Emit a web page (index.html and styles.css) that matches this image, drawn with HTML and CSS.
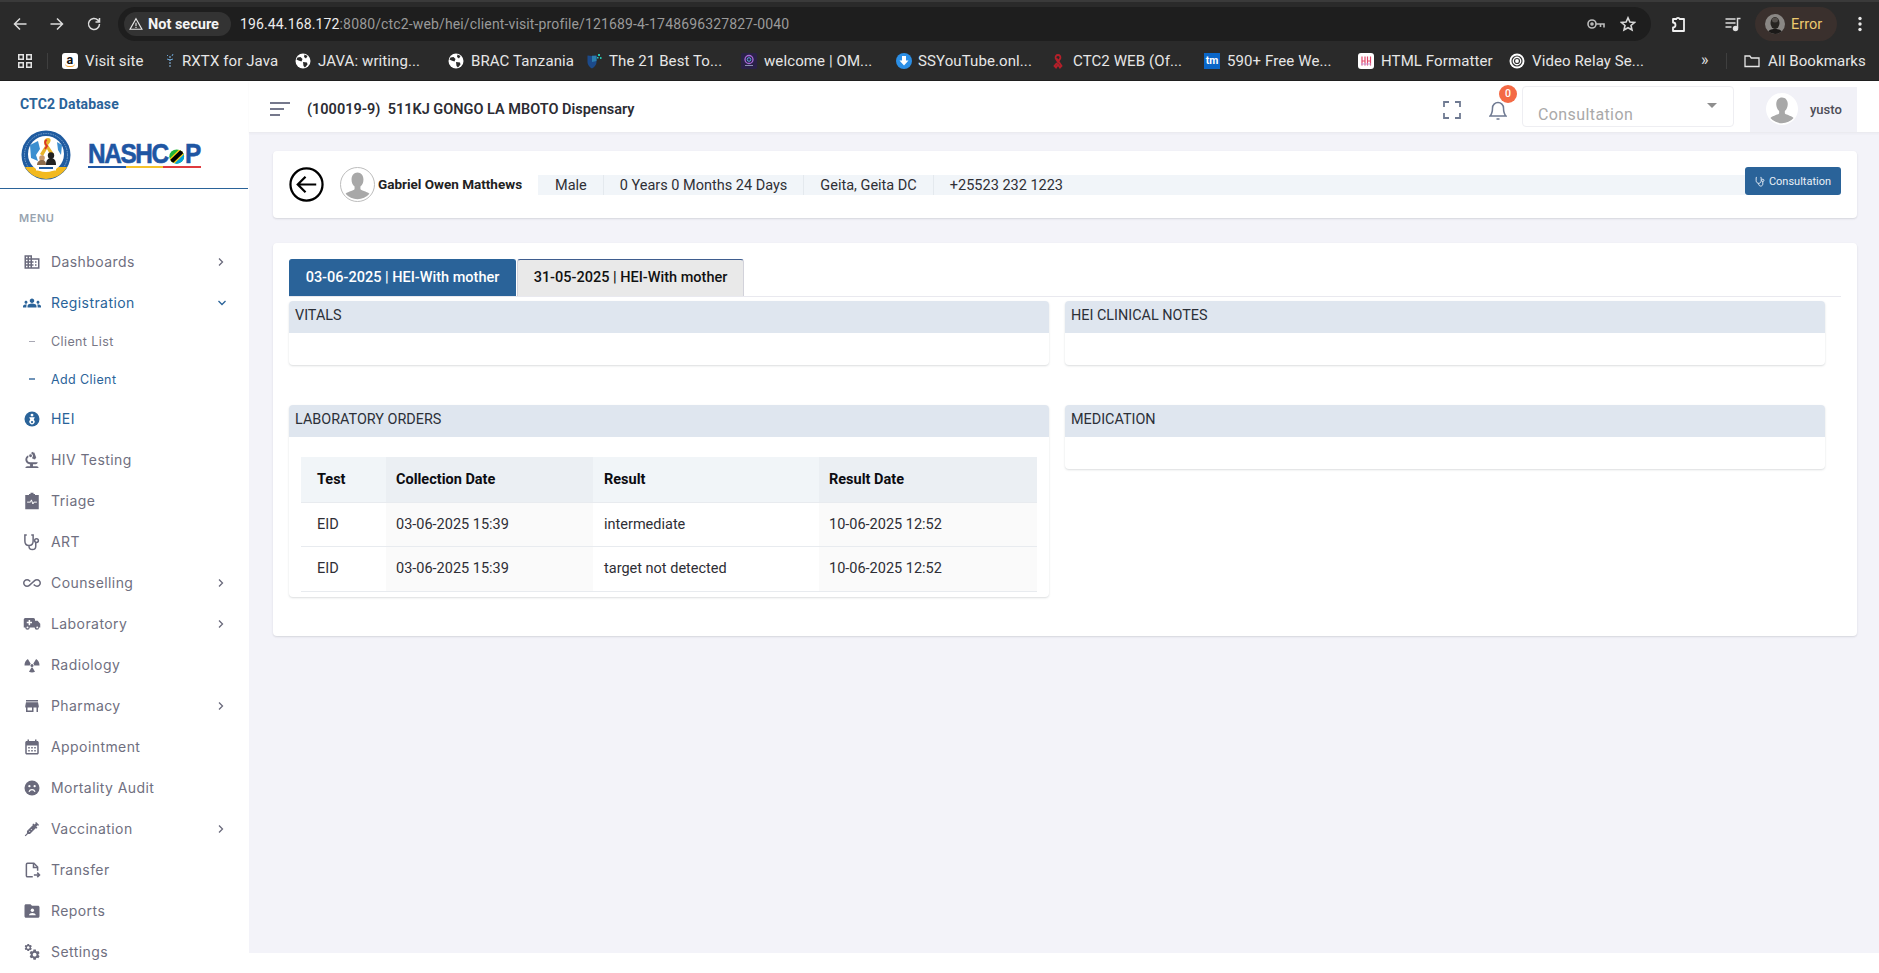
FILE: index.html
```html
<!DOCTYPE html>
<html lang="en">
<head>
<meta charset="utf-8">
<title>CTC2 Database</title>
<link rel="stylesheet" href="styles.css">
</head>
<body>
<svg class="defs" width="0" height="0" aria-hidden="true">
  <symbol id="person" viewBox="0 0 36 36"><path d="M18 5c4 0 6.500 3.200 6.500 7.500 0 3.300-1.300 6.200-3.300 7.800v2.600c0 1.300 6.800 2.600 9.800 5.100a17 17 0 0 1-26 0c3-2.500 9.800-3.800 9.800-5.100v-2.600c-2-1.600-3.300-4.500-3.300-7.800C11.500 8.200 14 5 18 5z" fill="#a8a8a8"/></symbol>
  <symbol id="gear" viewBox="0 0 24 24"><path d="M19.140 12.940c.04-.3.060-.61.060-.94 0-.32-.02-.64-.07-.94l2.030-1.580c.18-.14.23-.41.120-.61l-1.920-3.320c-.12-.22-.37-.29-.59-.22l-2.390.96c-.5-.38-1.030-.7-1.620-.94l-.36-2.540c-.04-.24-.24-.41-.48-.41h-3.840c-.24 0-.43.170-.47.410l-.36 2.540c-.59.240-1.130.570-1.620.940l-2.390-.96c-.22-.08-.47 0-.59.220L2.740 8.870c-.12.210-.08.470.120.610l2.030 1.580c-.05.300-.09.630-.09.940s.020.640.070.940l-2.030 1.580c-.18.140-.23.410-.12.610l1.920 3.320c.12.220.37.290.59.220l2.390-.96c.5.380 1.030.7 1.620.94l.36 2.540c.05.240.24.410.48.410h3.840c.24 0 .44-.17.47-.41l.36-2.540c.59-.24 1.130-.56 1.620-.94l2.390.96c.22.080.47 0 .59-.22l1.920-3.320c.12-.22.070-.47-.12-.61l-2.010-1.580zM12 15.600c-1.980 0-3.600-1.620-3.600-3.600s1.620-3.600 3.600-3.600 3.600 1.620 3.600 3.600-1.620 3.600-3.600 3.600z"/></symbol>
  <symbol id="globe" viewBox="0 0 16 16"><circle cx="8" cy="8" r="7.500" fill="#fff"/><path d="M2.500 4.500l3-.5 2 2-1 2.500-3-1-2-1zM9.500 1.500l3 1.500-1.500 2.500-2-1.500zM8 9l4 .5.5 2-2.500 3-1.500-1.500z" fill="#2b2b2b"/></symbol>
</svg>

<div class="browser">
  <div class="toolbar">
    <div class="nav-buttons">
      <svg class="tb-icon" viewBox="0 0 16 16"><path d="M14.500 8H2.500M8 2.500L2.500 8 8 13.500"/></svg>
      <svg class="tb-icon" viewBox="0 0 16 16"><path d="M1.500 8h12M8 2.500L13.500 8 8 13.500"/></svg>
      <svg class="tb-icon" viewBox="0 0 16 16"><path d="M13.500 8a5.500 5.500 0 1 1-1.600-3.900L13.500 6M13.500 2v4h-4"/></svg>
    </div>
    <div class="omnibox">
      <div class="chip">
        <svg class="warn" viewBox="0 0 16 16"><path d="M8 2l6.800 12H1.200zM8 6.500v4M8 11.300v1.200"/></svg>
        <span>Not secure</span>
      </div>
      <div class="url"><span class="url-host">196.44.168.172</span>:8080/ctc2-web/hei/client-visit-profile/121689-4-1748696327827-0040</div>
      <svg class="omni-icon" viewBox="0 0 18 12"><circle cx="5" cy="6" r="4"/><circle cx="5" cy="6" r="1"/><path d="M9 6h8v3.500M13.500 6v3"/></svg>
      <svg class="omni-icon star" viewBox="0 0 16 16"><path d="M8 1.800l1.900 4.200 4.500.5-3.400 3 1 4.500L8 11.700 4 14l1-4.500-3.400-3 4.500-.5z"/></svg>
    </div>
    <svg class="tb-icon puzzle" viewBox="0 0 18 18"><path d="M5 4h3.200a2 2 0 0 1 3.600 0H16v12H5v-3.500a2.500 2.500 0 0 0 0-5z" stroke-linejoin="round"/></svg>
    <svg class="tb-icon queue" viewBox="0 0 18 18"><path d="M1.500 4h10M1.500 8h10M1.500 12h6M16.500 3.500h-3V13"/><circle cx="11.500" cy="13.500" r="2" fill="#e8e8e8"/></svg>
    <div class="profile">
      <span class="profile-pic"><svg viewBox="0 0 20 20"><ellipse cx="10" cy="9" rx="4.500" ry="6" fill="#262320"/><ellipse cx="10" cy="6" rx="3" ry="2.500" fill="#55504c"/><path d="M2 20c1-4 4-5 8-5s7 1 8 5z" fill="#1b1918"/></svg></span>
      <span class="profile-label">Error</span>
    </div>
    <svg class="dots" viewBox="0 0 4 16"><circle cx="2" cy="2.500" r="1.700"/><circle cx="2" cy="8" r="1.700"/><circle cx="2" cy="13.500" r="1.700"/></svg>
  </div>
  <div class="bookmarks">
    <svg class="apps" viewBox="0 0 14 14"><path d="M.75.75h4.500v4.500h-4.500zM8.750.75h4.500v4.500h-4.500zM.75 8.750h4.500v4.500h-4.500zM8.750 8.750h4.500v4.500h-4.500z"/></svg>
    <span class="bm-sep"></span>
    <div class="bm-list">
      <div class="bm"><span class="fav fav-amazon">a</span><span>Visit site</span></div>
      <div class="bm"><svg class="fav fav-narrow" viewBox="0 0 10 16"><path d="M5 3v12" stroke="#7fa8cc" stroke-width="1.200" stroke-dasharray="2 1"/><path d="M2 2l1 1M8 1L7 3M2 6l3 1 3-1" stroke="#6aa5d6" fill="none"/></svg><span>RXTX for Java</span></div>
      <div class="bm"><svg class="fav"><use href="#globe"/></svg><span>JAVA: writing...</span></div>
      <div class="bm"><svg class="fav"><use href="#globe"/></svg><span>BRAC Tanzania</span></div>
      <div class="bm"><svg class="fav" viewBox="0 0 16 16"><path d="M1.500 2.500c3 .5 6 .5 9 0V9c0 3-2.500 5.500-4.500 6.500C4 14.500 1.500 12 1.500 9z" fill="#1c4a8a"/><path d="M6 2.800h4.500V8L6 9z" fill="#2c7fb0"/><path d="M12 1h2v2h-2zM14 4h1.500v2H14zM11 4h1.500v1.500H11z" fill="#27c4b0"/></svg><span>The 21 Best To...</span></div>
      <div class="bm"><svg class="fav" viewBox="0 0 16 16"><rect width="16" height="16" rx="1.500" fill="#2a2148"/><circle cx="8" cy="6.500" r="4" fill="none" stroke="#a86ad8" stroke-width="1.300"/><circle cx="8" cy="6.500" r="1.800" fill="none" stroke="#5fa8e0"/><path d="M4 12.500h8" stroke="#8a8fb0"/></svg><span>welcome | OM...</span></div>
      <div class="bm bm-tight"><svg class="fav" viewBox="0 0 16 16"><circle cx="8" cy="8" r="8" fill="#2b8fe6"/><path d="M6 3h4v4.500h2.500L8 12.500 3.500 7.500H6z" fill="#fff"/></svg><span>SSYouTube.onl...</span></div>
      <div class="bm"><svg class="fav" viewBox="0 0 16 16"><path d="M8 2c-1.800 0-2.800 1.500-2.300 3.300L8 9l2.300-3.700C10.800 3.500 9.800 2 8 2zM7 10L4.500 13l1.500 1.500L8 11.500 10 14.500 11.500 13 6.500 5.500" fill="none" stroke="#b5202a" stroke-width="1.800"/></svg><span>CTC2 WEB (Of...</span></div>
      <div class="bm"><span class="fav fav-tm">tm</span><span>590+ Free We...</span></div>
      <div class="bm"><svg class="fav" viewBox="0 0 16 16"><rect width="16" height="16" rx="3" fill="#fff"/><path d="M4 3.500v9M7 3.500v9M4 8h3M9.500 3.500v9M12.500 3.500v9M9.500 8h3" stroke="#e0486a" stroke-width="1.200"/><path d="M3 11h10" stroke="#c8a0e0"/></svg><span>HTML Formatter</span></div>
      <div class="bm"><svg class="fav" viewBox="0 0 16 16"><circle cx="8" cy="8" r="7.500" fill="#fff"/><circle cx="8" cy="8" r="5" fill="none" stroke="#333" stroke-width="1.200"/><circle cx="8" cy="8" r="2.500" fill="none" stroke="#333" stroke-width="1.200"/></svg><span>Video Relay Se...</span></div>
    </div>
    <span class="bm-more">»</span>
    <span class="bm-sep bm-sep-right"></span>
    <svg class="folder" viewBox="0 0 16 16"><path d="M1 3h4.800l1.500 2H15v8.500H1z"/></svg>
    <span class="bm-all">All Bookmarks</span>
  </div>
</div>

<div class="app">
  <aside class="sidebar">
    <div class="brand">
      <div class="brand-title">CTC2 Database</div>
      <div class="logos">
        <svg class="emblem" viewBox="0 0 50 50">
          <circle cx="25" cy="25" r="24.500" fill="#1f5ba0"/>
          <circle cx="25" cy="25" r="21.500" fill="none" stroke="#8fb4d8" stroke-width=".8" stroke-dasharray="1.500 1"/>
          <path d="M4 37a24.500 24.500 0 0 0 42 0z" fill="#f2b91f"/>
          <circle cx="25" cy="24" r="18" fill="#fff"/>
          <path d="M9 15l8-4 2 8-4 6 2 6-7-3zM41 15l-5-3 1 8 3 5z" fill="#3c8fd0"/>
          <path d="M27 8c-4 0-5 4-3 8l-5 8 3 2 4-7 4 7 3-2-6-9c3-3 4-7 0-7z" fill="#e8b32a"/>
          <path d="M26 10c-3 1-2 4 0 6l-2 3" stroke="#d9332b" stroke-width="1.800" fill="none"/>
          <circle cx="21" cy="28" r="2.800" fill="#c9966a"/><circle cx="30" cy="25.500" r="3.200" fill="#222"/><path d="M25 35c0-5 2-7 5-7s5 2 5 7z" fill="#222"/><path d="M16 35c0-3 2-5 5-5s4 2 4 5z" fill="#8b6a4a"/>
          <rect x="15" y="35.500" width="20" height="5" fill="#fff"/>
          <rect x="18" y="37" width="14" height="2" fill="#1f5ba0"/>
        </svg>
        <div class="nashcop">
          <div class="nashcop-word">NASHC<svg class="flag-o" viewBox="0 0 20 20" preserveAspectRatio="none"><clipPath id="flagclip"><circle cx="10" cy="10" r="9.500"/></clipPath><g clip-path="url(#flagclip)"><rect width="20" height="20" fill="#1eb53a"/><path d="M20 0v20H0z" fill="#00a3dd"/><path d="M0 20L20 0" stroke="#fcd116" stroke-width="9"/><path d="M0 20L20 0" stroke="#000" stroke-width="5.500"/></g></svg>P</div>
          <div class="nashcop-bar"><i class="bar-blue"></i><i class="bar-yellow"></i><i class="bar-red"></i></div>
        </div>
      </div>
    </div>
    <div class="menu-title">MENU</div>
    <nav class="menu">
      <a class="item"><svg class="ic" viewBox="0 0 24 24"><path d="M12 7V3H2v18h20V7H12zM6 19H4v-2h2v2zm0-4H4v-2h2v2zm0-4H4V9h2v2zm0-4H4V5h2v2zm4 12H8v-2h2v2zm0-4H8v-2h2v2zm0-4H8V9h2v2zm0-4H8V5h2v2zm10 12h-8v-2h2v-2h-2v-2h2v-2h-2V9h8v10zm-2-8h-2v2h2v-2zm0 4h-2v2h2v-2z"/></svg><span class="lbl">Dashboards</span><svg class="chev" viewBox="0 0 10 10"><path d="M3 1.500L6.500 5 3 8.500"/></svg></a>
      <a class="item active"><svg class="ic" viewBox="0 0 24 24"><path d="M12 12.750c1.630 0 3.070.39 4.240.9 1.080.48 1.760 1.560 1.760 2.730V18H6v-1.610c0-1.180.68-2.260 1.760-2.730 1.170-.52 2.610-.91 4.240-.91zM4 13c1.100 0 2-.9 2-2s-.9-2-2-2-2 .9-2 2 .9 2 2 2zm1.130 1.100c-.37-.06-.74-.1-1.130-.1-.99 0-1.930.21-2.780.58C.48 14.900 0 15.620 0 16.430V18h4.500v-1.610c0-.83.23-1.610.63-2.290zM20 13c1.100 0 2-.9 2-2s-.9-2-2-2-2 .9-2 2 .9 2 2 2zm4 3.430c0-.81-.48-1.530-1.220-1.850-.85-.37-1.790-.58-2.780-.58-.39 0-.76.04-1.130.1.4.68.63 1.460.63 2.290V18H24v-1.570zM12 6c1.660 0 3 1.340 3 3s-1.340 3-3 3-3-1.340-3-3 1.340-3 3-3z"/></svg><span class="lbl">Registration</span><svg class="chev chev-down" viewBox="0 0 10 10"><path d="M1.500 3L5 6.500 8.500 3"/></svg></a>
      <a class="sub"><i class="dash"></i><span>Client List</span></a>
      <a class="sub sub-active"><i class="dash"></i><span>Add Client</span></a>
      <a class="item active"><svg class="ic" viewBox="0 0 24 24"><circle cx="12" cy="12" r="10"/><circle cx="12" cy="6.800" r="1.900" fill="#fff"/><path d="M8.300 9.800h7.400l-1.400 3.200a3.500 3.500 0 1 1-4.600 0z" fill="#fff"/><circle cx="12" cy="16" r="1.500"/></svg><span class="lbl">HEI</span></a>
      <a class="item"><svg class="ic" viewBox="3.500 3 17 19"><path d="M7 19c-1.100 0-2 .9-2 2h14c0-1.100-.9-2-2-2h-4v-2h3c1.100 0 2-.9 2-2h-8c-1.660 0-3-1.340-3-3 0-1.090.59-2.040 1.460-2.560C8.170 9.030 8 8.540 8 8c0-.21.040-.42.090-.62C6.280 8.130 5 9.920 5 12c0 2.760 2.240 5 5 5v2H7z"/><path d="M10.560 5.510C11.910 5.540 13 6.640 13 8c0 .75-.33 1.410-.85 1.870l.59 1.620.94-.34.34.94 1.880-.68-.34-.94.94-.34-2.050-5.640-.94.34-.34-.94-1.880.68.34.94-.94.350.42 1.650z"/><circle cx="10.500" cy="8" r="1.500"/></svg><span class="lbl">HIV Testing</span></a>
      <a class="item"><svg class="ic" viewBox="0 0 24 24"><path d="M3 4h5V2.500h2V1h4v1.500h2V4h5v19H3z"/><path d="M5.500 13.500H10l1.200-3 2 5.500 1.300-2.500h4" stroke="#fff" stroke-width="1.300" fill="none"/></svg><span class="lbl">Triage</span></a>
      <a class="item"><svg class="ic ic-line" viewBox="0 0 24 24"><path d="M5 2.500H2.500v8c0 4 2.500 6 5.500 6s5.500-2 5.500-6v-8H11M8 16.500v1c0 2.500 2 4.500 4.500 4.500s4.500-2 4.500-4.500V13"/><circle cx="18" cy="10" r="2.500"/></svg><span class="lbl">ART</span></a>
      <a class="item"><svg class="ic" viewBox="0 0 24 24"><path d="M18.600 6.620c-1.440 0-2.800.56-3.770 1.530L12 10.660 10.480 12h.01L7.800 14.390c-.64.640-1.490.99-2.400.99-1.870 0-3.390-1.510-3.390-3.380S3.530 8.620 5.400 8.620c.91 0 1.760.35 2.440 1.030l1.130 1 1.510-1.340L9.220 8.200C8.200 7.180 6.840 6.620 5.400 6.620 2.420 6.620 0 9.040 0 12s2.420 5.380 5.400 5.380c1.440 0 2.800-.56 3.770-1.530l2.830-2.500.01.01L13.520 12h-.01l2.690-2.390c.64-.64 1.490-.99 2.400-.99 1.870 0 3.390 1.510 3.390 3.380s-1.520 3.380-3.390 3.380c-.9 0-1.760-.35-2.440-1.030l-1.140-1.010-1.510 1.340 1.270 1.120c1.020 1.010 2.370 1.570 3.820 1.570 2.980 0 5.400-2.410 5.400-5.380s-2.420-5.370-5.400-5.370z"/></svg><span class="lbl">Counselling</span><svg class="chev" viewBox="0 0 10 10"><path d="M3 1.500L6.500 5 3 8.500"/></svg></a>
      <a class="item"><svg class="ic" viewBox="0 0 24 24"><path d="M1 6a2 2 0 0 1 2-2h11a2 2 0 0 1 2 2v1.500h3.500l3.500 4v5h-1.500a3 3 0 0 1-6 0H9a3 3 0 0 1-6 0H1z"/><path d="M7.500 6.500h2V9H12v2H9.500v2.500h-2V11H5V9h2.500z" fill="#fff"/><circle cx="6" cy="16.500" r="1.300" fill="#fff"/><circle cx="19" cy="16.500" r="1.300" fill="#fff"/></svg><span class="lbl">Laboratory</span><svg class="chev" viewBox="0 0 10 10"><path d="M3 1.500L6.500 5 3 8.500"/></svg></a>
      <a class="item"><svg class="ic" viewBox="0 0 24 24"><circle cx="12" cy="12.500" r="2"/><path d="M6.500 4l3.800 6.300a3 3 0 0 0-1.300 2.200H2a10 10 0 0 1 4.500-8.500zM17.500 4l-3.800 6.300a3 3 0 0 1 1.300 2.200h7a10 10 0 0 0-4.500-8.500zM8 21l3.300-5.700a3 3 0 0 0 1.400 0L16 21a10 10 0 0 1-8 0z"/></svg><span class="lbl">Radiology</span></a>
      <a class="item"><svg class="ic" viewBox="0 0 24 24"><path d="M20 4H4v2h16V4zm1 10v-2l-1-5H4l-1 5v2h1v6h10v-6h4v6h2v-6h1zm-9 4H6v-4h6v4z"/></svg><span class="lbl">Pharmacy</span><svg class="chev" viewBox="0 0 10 10"><path d="M3 1.500L6.500 5 3 8.500"/></svg></a>
      <a class="item"><svg class="ic" viewBox="0 0 24 24"><path d="M19 4h-1V2h-2v2H8V2H6v2H5c-1.100 0-2 .9-2 2v14c0 1.100.9 2 2 2h14c1.100 0 2-.9 2-2V6c0-1.100-.9-2-2-2zm0 16H5V10h14v10z"/><path d="M7 12h2v2H7zM11 12h2v2h-2zM15 12h2v2h-2zM7 16h2v2H7zM11 16h2v2h-2zM15 16h2v2h-2z"/></svg><span class="lbl">Appointment</span></a>
      <a class="item"><svg class="ic" viewBox="0 0 24 24"><circle cx="12" cy="12" r="10"/><circle cx="8.500" cy="9.500" r="1.500" fill="#fff"/><circle cx="15.500" cy="9.500" r="1.500" fill="#fff"/><path d="M8 17c.8-1.800 2.200-2.700 4-2.700s3.200.9 4 2.700" stroke="#fff" stroke-width="1.700" fill="none"/></svg><span class="lbl">Mortality Audit</span></a>
      <a class="item"><svg class="ic" viewBox="0 0 24 24"><path d="M17.500 2.500l4 4-1.200 1.200-.8-.8-1.800 1.800 1.600 1.600-1.200 1.200-.8-.8-8 8H6.500l-3 3-1.200-1.200 3-3v-3l8-8-.8-.8 1.200-1.200 1.600 1.600 1.800-1.800-.8-.8z"/><path d="M8 14.500l1.500 1.500M10.500 12l1.500 1.500" stroke="#fff"/></svg><span class="lbl">Vaccination</span><svg class="chev" viewBox="0 0 10 10"><path d="M3 1.500L6.500 5 3 8.500"/></svg></a>
      <a class="item"><svg class="ic ic-line" viewBox="0 0 24 24"><path d="M13 21H6a1.500 1.500 0 0 1-1.500-1.500v-15A1.500 1.500 0 0 1 6 3h8.500l5 5v5"/><path d="M14 3v5.500h5.500"/><path d="M14.500 18.500h7M19 15.500l3 3-3 3"/></svg><span class="lbl">Transfer</span></a>
      <a class="item"><svg class="ic" viewBox="0 0 24 24"><path d="M20 5h-8l-2-2H4c-1.100 0-1.990.9-1.990 2L2 19c0 1.100.9 2 2 2h16c1.100 0 2-.9 2-2V7c0-1.100-.9-2-2-2z"/><circle cx="12.500" cy="11" r="2.200" fill="#fff"/><path d="M8 17.500c0-1.800 2.500-2.800 4.500-2.800s4.500 1 4.500 2.800z" fill="#fff"/></svg><span class="lbl">Reports</span></a>
      <a class="item"><svg class="ic" viewBox="0 0 24 24"><svg x="1" y="0" width="12" height="12"><use href="#gear"/></svg><svg x="7" y="7" width="17" height="17"><use href="#gear"/></svg></svg><span class="lbl">Settings</span></a>
    </nav>
  </aside>

  <main class="main">
    <header class="topbar">
      <svg class="hamburger" viewBox="0 0 20 14"><path d="M0 1h20M0 7h14M0 13h10"/></svg>
      <div class="facility">(100019-9)&nbsp; 511KJ GONGO LA MBOTO Dispensary</div>
      <div class="top-right">
        <svg class="fullscreen" viewBox="0 0 18 18"><path d="M1 6V1h5M12 1h5v5M17 12v5h-5M6 17H1v-5"/></svg>
        <div class="bell-wrap">
          <svg class="bell" viewBox="0 0 18 20"><path d="M9 1.500a5.500 5.500 0 0 0-5.500 5.500c0 5-1 6.500-2.500 8h16c-1.500-1.500-2.500-3-2.500-8A5.500 5.500 0 0 0 9 1.500zM7.500 18h3"/></svg>
          <span class="badge">0</span>
        </div>
        <div class="role-select"><span>Consultation</span><i class="caret"></i></div>
        <div class="user">
          <span class="user-pic"><svg><use href="#person"/></svg></span>
          <span class="user-name">yusto</span>
        </div>
      </div>
    </header>

    <div class="content">
      <section class="card patient">
        <svg class="back" viewBox="0 0 36 36"><circle cx="18" cy="18" r="16.500"/><path d="M28 18H9M17 10l-8 8 8 8"/></svg>
        <span class="patient-pic"><svg><use href="#person"/></svg></span>
        <span class="patient-name">Gabriel Owen Matthews</span>
        <div class="strip">
          <span>Male</span>
          <span>0 Years 0 Months 24 Days</span>
          <span>Geita, Geita DC</span>
          <span>+25523 232 1223</span>
        </div>
        <button class="consult"><svg viewBox="0 0 24 24"><path d="M4 3H2.500v7c0 4 3 6 5.500 6s5.500-2 5.500-6V3H12M8 16v1.500c0 2.500 2 4.500 4.500 4.500s4.500-2 4.500-4.500V12"/><circle cx="17" cy="9.500" r="2.500"/></svg>Consultation</button>
      </section>

      <section class="card visits">
        <div class="tabs">
          <div class="tab tab-on">03-06-2025 | HEI-With mother</div>
          <div class="tab">31-05-2025 | HEI-With mother</div>
        </div>
        <div class="panels">
          <div class="panel"><div class="panel-head">VITALS</div><div class="panel-body"></div></div>
          <div class="panel"><div class="panel-head">HEI CLINICAL NOTES</div><div class="panel-body"></div></div>
          <div class="panel">
            <div class="panel-head">LABORATORY ORDERS</div>
            <div class="panel-table">
              <table>
                <colgroup><col class="c1"><col class="c2"><col class="c3"><col class="c4"></colgroup>
                <thead><tr><th>Test</th><th>Collection Date</th><th>Result</th><th>Result Date</th></tr></thead>
                <tbody>
                  <tr><td>EID</td><td>03-06-2025 15:39</td><td>intermediate</td><td>10-06-2025 12:52</td></tr>
                  <tr class="row-last"><td>EID</td><td>03-06-2025 15:39</td><td>target not detected</td><td>10-06-2025 12:52</td></tr>
                </tbody>
              </table>
            </div>
          </div>
          <div class="panel"><div class="panel-head">MEDICATION</div><div class="panel-body"></div></div>
        </div>
      </section>
    </div>
    <footer class="footer"></footer>
  </main>
</div>
</body>
</html>
```

FILE: styles.css
```css
* { box-sizing: border-box; }
html, body { margin: 0; padding: 0; }
body { width: 1879px; height: 973px; overflow: hidden; font-family: Roboto, "Liberation Sans", sans-serif; background: #f3f3f9; }
.defs { position: absolute; }

/* browser chrome */
.browser { height: 81px; background: #2a2a2a; border-top: 2px solid #3a3a3a; border-bottom: 1px solid #1f1f1f; color: #e6e6e6; }
.toolbar { height: 39px; display: flex; align-items: center; padding-top: 5px; }
.nav-buttons { display: flex; width: 118px; padding-left: 12px; gap: 21px; }
.tb-icon { width: 16px; height: 16px; fill: none; stroke: #dcdcdc; stroke-width: 1.500; flex: none; }
.omnibox { width: 1533px; height: 34px; background: #1e1e1e; border-radius: 17px; display: flex; align-items: center; padding: 0 0 0 6px; }
.chip { width: 107px; height: 24px; background: #333; border-radius: 12px; display: flex; align-items: center; padding-left: 5px; gap: 5px; font-size: 14.500px; font-weight: 700; color: #f4f4f4; white-space: nowrap; flex: none; }
.warn { width: 14px; height: 14px; fill: none; stroke: #e8e8e8; stroke-width: 1.300; flex: none; }
.url { margin-left: 9px; flex: 1; font-size: 14px; color: #9a9a9a; white-space: nowrap; letter-spacing: 0.010em; }
.url-host { color: #ececec; }
.omni-icon { width: 18px; height: 12px; fill: none; stroke: #bdbdbd; stroke-width: 1.600; margin-right: 15px; flex: none; }
.star { width: 16px; height: 16px; margin-right: 15px; stroke: #d8d8d8; }
.puzzle { margin-left: 17px; width: 18px; height: 18px; stroke-width: 1.800; stroke: #f0f0f0; }
.queue { margin-left: 38px; width: 18px; height: 18px; }
.profile { margin-left: 13px; width: 82px; height: 34px; border-radius: 17px; background: #3a302d; display: flex; align-items: center; padding-left: 10px; gap: 6px; flex: none; }
.profile-pic { width: 20px; height: 20px; border-radius: 50%; background: #8a8784; overflow: hidden; display: block; }
.profile-pic svg { width: 20px; height: 20px; display: block; }
.profile-label { font-size: 14.500px; color: #edc96e; }
.dots { margin-left: 21px; width: 4px; height: 16px; fill: #e8e8e8; flex: none; }
.bookmarks { height: 39px; display: flex; align-items: center; padding-left: 18px; font-size: 15px; letter-spacing: 0.100px; color: #e6e6e6; }
.apps { width: 14px; height: 14px; fill: none; stroke: #e3e3e3; stroke-width: 1.500; flex: none; }
.bm-sep { width: 1px; height: 16px; background: #3f3f3f; margin-left: 15px; flex: none; }
.bm-list { margin-left: 14px; width: 1637px; flex: none; display: grid; grid-template-columns: 103px 130px 153px 138px 155px 155px 154px 154px 154px 151px 190px; align-items: center; white-space: nowrap; }
.bm { display: flex; align-items: center; gap: 7px; }
.bm-tight { gap: 6px; }
.fav { width: 16px; height: 16px; flex: none; display: block; }
.fav-narrow { width: 10px; }
.fav-amazon { position: relative; background: #fff; border-radius: 3px; color: #111; font-size: 12.500px; font-weight: 700; line-height: 13px; text-align: center; }
.fav-amazon::after { content: ""; position: absolute; left: 3px; right: 3px; bottom: 2px; height: 3px; border-bottom: 1.500px solid #f0a030; border-radius: 0 0 6px 6px; }
.fav-tm { background: #0a66c8; color: #fff; font-size: 10.500px; font-weight: 700; line-height: 15px; text-align: center; letter-spacing: 0; }
.bm-more { margin-left: 2px; width: 12px; flex: none; font-size: 16px; color: #e3e3e3; line-height: 16px; margin-top: -2px; }
.bm-sep-right { margin-left: 13px; }
.folder { margin-left: 17px; width: 16px; height: 16px; fill: none; stroke: #e6e6e6; stroke-width: 1.300; flex: none; }
.bm-all { margin-left: 8px; white-space: nowrap; }

/* app */
.app { height: 892px; display: flex; }
.sidebar { width: 249px; flex: none; background: #fff; overflow: hidden; }
.brand { height: 108px; margin-right: 1px; border-bottom: 1px solid #2a6399; padding: 16px 0 0 20px; }
.brand-title { font-size: 14px; font-weight: 700; color: #2a6399; line-height: 14px; letter-spacing: 0.010em; }
.logos { display: flex; align-items: flex-start; margin-top: 19px; gap: 17px; margin-left: 1px; }
.emblem { width: 50px; height: 50px; flex: none; }
.nashcop { width: 113px; margin-top: 12px; }
.nashcop-word { font-family: "Liberation Sans", sans-serif; font-weight: 700; font-size: 28px; line-height: 23px; height: 22px; color: #1f56a3; letter-spacing: -1.600px; -webkit-text-stroke: 0.600px #1f56a3; white-space: nowrap; display: flex; align-items: center; transform: scaleX(.87); transform-origin: left center; }
.flag-o { width: 18px; height: 15px; margin: 6px 1px 0 1px; flex: none; }
.nashcop-bar { display: flex; height: 2px; margin-top: 2px; }
.nashcop-bar i { display: block; flex: 1; }
.bar-blue { background: #1f56a3; }
.bar-yellow { background: #f5c22a; }
.bar-red { background: #e03a3e; }
.menu-title { padding: 23px 0 0 19px; height: 52px; font-size: 11px; font-weight: 600; line-height: 13px; letter-spacing: 0.050em; color: #98a4b0; font-family: Inter, sans-serif; }
.menu { display: flex; flex-direction: column; }
.item { height: 41px; flex: none; display: flex; align-items: center; padding-left: 23px; font-family: Inter, sans-serif; font-size: 14px; letter-spacing: 0.420px; color: #6f6f80; }
.ic { width: 18px; height: 18px; fill: #6a6a7c; flex: none; margin-right: 10px; }
.ic-line { fill: none; stroke: #6a6a7c; stroke-width: 2; }
.lbl { flex: 1; }
.chev { width: 10px; height: 10px; fill: none; stroke: #6a6a7c; stroke-width: 1.300; margin-right: 23px; }
.chev-down { margin-right: 22px; }
.active { color: #2a6399; }
.active .ic { fill: #2a6399; }
.active .chev { stroke: #2a6399; }
.sub { height: 37.500px; flex: none; display: flex; align-items: center; padding-left: 29px; font-family: Inter, sans-serif; font-size: 12.500px; letter-spacing: 0.400px; color: #777786; }
.dash { display: block; width: 6px; height: 1px; background: #a8a8b4; margin-right: 16px; }
.sub-active { color: #2a6399; }
.sub-active .dash { height: 2px; background: #6f93b8; }

.main { flex: 1; min-width: 0; display: flex; flex-direction: column; background: #f3f3f9; }
.topbar { height: 52px; flex: none; background: #fff; border-bottom: 1px solid #ebebf0; display: flex; align-items: center; padding-left: 21px; padding-right: 22px; box-shadow: 0 1px 2px rgba(40,40,70,.04); }
.hamburger { width: 20px; height: 14px; stroke: #75788c; stroke-width: 2; fill: none; flex: none; margin-top: 5px; }
.facility { margin-left: 17px; font-size: 14.500px; font-weight: 600; color: #2c2c33; white-space: nowrap; margin-top: 5px; }
.top-right { margin-left: auto; display: flex; align-items: flex-end; height: 100%; }
.fullscreen { width: 18px; height: 18px; fill: none; stroke: #6f7a92; stroke-width: 1.800; margin-bottom: 13px; flex: none; }
.bell-wrap { position: relative; margin-left: 28px; width: 18px; height: 20px; margin-bottom: 11px; }
.bell { width: 18px; height: 20px; fill: none; stroke: #6f7a92; stroke-width: 1.500; display: block; }
.badge { position: absolute; left: 10px; top: -16px; width: 18px; height: 18px; border-radius: 50%; background: #f46a45; color: #fff; font-size: 10.500px; font-weight: 500; line-height: 18px; text-align: center; }
.role-select { position: relative; margin-left: 15px; width: 212px; height: 41px; margin-bottom: 5px; background: #fff; border: 1px solid #eeeef2; border-radius: 4px; padding: 19px 0 0 15px; font-size: 16px; line-height: 18px; letter-spacing: 0.400px; color: #a9a9a9; }
.caret { position: absolute; right: 16px; top: 16px; border-left: 5px solid transparent; border-right: 5px solid transparent; border-top: 5px solid #8e8e8e; }
.user { margin-left: 16px; width: 107px; height: 45px; background: #f1f1f7; display: flex; align-items: center; padding-left: 16px; }
.user-pic { width: 32px; height: 32px; background: #fff; border-radius: 50%; overflow: hidden; display: block; margin-top: -1px; flex: none; }
.user-pic svg { width: 32px; height: 32px; display: block; }
.user-name { margin-left: 12px; font-size: 13px; font-weight: 500; color: #4d4d56; margin-top: -1px; }

.content { flex: 1; padding: 18px 22px 0 24px; min-height: 0; }
.card { background: #fff; border-radius: 4px; box-shadow: 0 1px 2px rgba(56,65,74,.16); }
.patient { height: 67px; display: flex; align-items: flex-start; padding: 16px 16px 0 16px; }
.back { width: 35px; height: 35px; flex: none; fill: none; stroke: #000; stroke-width: 2.300; }
.patient-pic { width: 35px; height: 35px; margin-left: 16px; border-radius: 50%; border: 1px solid #bdbdbd; overflow: hidden; display: block; flex: none; }
.patient-pic svg { width: 33px; height: 33px; display: block; }
.patient-name { margin-left: 3px; font-size: 13.500px; font-weight: 700; color: #222; line-height: 34px; white-space: nowrap; width: 160px; flex: none; }
.strip { flex: 1; height: 20px; margin-top: 8px; background: #f1f5f9; display: flex; font-size: 14.500px; line-height: 21px; color: #2f2f35; white-space: nowrap; }
.strip span { padding: 0 16px; border-right: 1px solid #e4e9ee; }
.strip span:first-child { padding-left: 17px; }
.strip span:last-child { border-right: 0; }
.consult { width: 96px; height: 28px; border: 0; border-radius: 3px; background: #2a6399; color: #e9f0f7; font-family: Roboto, sans-serif; font-size: 11px; display: flex; align-items: center; justify-content: center; gap: 3px; padding: 0; flex: none; }
.consult svg { width: 11px; height: 11px; fill: none; stroke: #e9f0f7; stroke-width: 2; }
.visits { height: 393px; margin-top: 25px; padding: 16px 16px 0 16px; }
.tabs { display: flex; gap: 1px; border-bottom: 1px solid #e9e9ef; height: 38px; }
.tab { width: 227px; height: 37px; border-radius: 3px 3px 0 0; background: #e9e9e9; border: 1px solid #d2d2da; border-top-color: #3f5d8f; border-bottom: 0; color: #111; font-size: 14.500px; font-weight: 500; text-align: center; line-height: 36px; white-space: nowrap; }
.tab-on { background: #2a6399; border-color: #2a6399; color: #fff; }
.panels { display: grid; grid-template-columns: 760px 760px; gap: 40px 16px; align-items: start; margin-top: 4px; }
.panel { background: #fff; border-radius: 4px; box-shadow: 0 1px 2px rgba(56,65,74,.18); overflow: hidden; }
.panel-head { height: 32px; background: #dfe6ef; padding-left: 6px; font-size: 14.400px; line-height: 30px; color: #2c3038; }
.panel-body { height: 32px; }
.panel-table { padding: 20px 12px 5px; }
table { width: 736px; border-collapse: collapse; table-layout: fixed; font-size: 14.500px; color: #2e2e35; }
.c1 { width: 85px; }
.c2 { width: 207px; }
.c3 { width: 226px; }
.c4 { width: 218px; }
th { height: 45px; text-align: left; font-weight: 700; color: #0c0c10; padding: 0 10px; background: #f1f5f8; border-bottom: 1px solid #e8ebef; }
td { height: 44px; padding: 0 10px; border-bottom: 1px solid #e8ebef; }
.row-last td { height: 45px; }
th:first-child, td:first-child { padding-left: 16px; }
th:nth-child(3), td:nth-child(3) { padding-left: 11px; }
th:nth-child(even) { background: #ebeff3; }
td:nth-child(even) { background: #fafafa; }
.footer { height: 20px; flex: none; background: #fff; }
```
